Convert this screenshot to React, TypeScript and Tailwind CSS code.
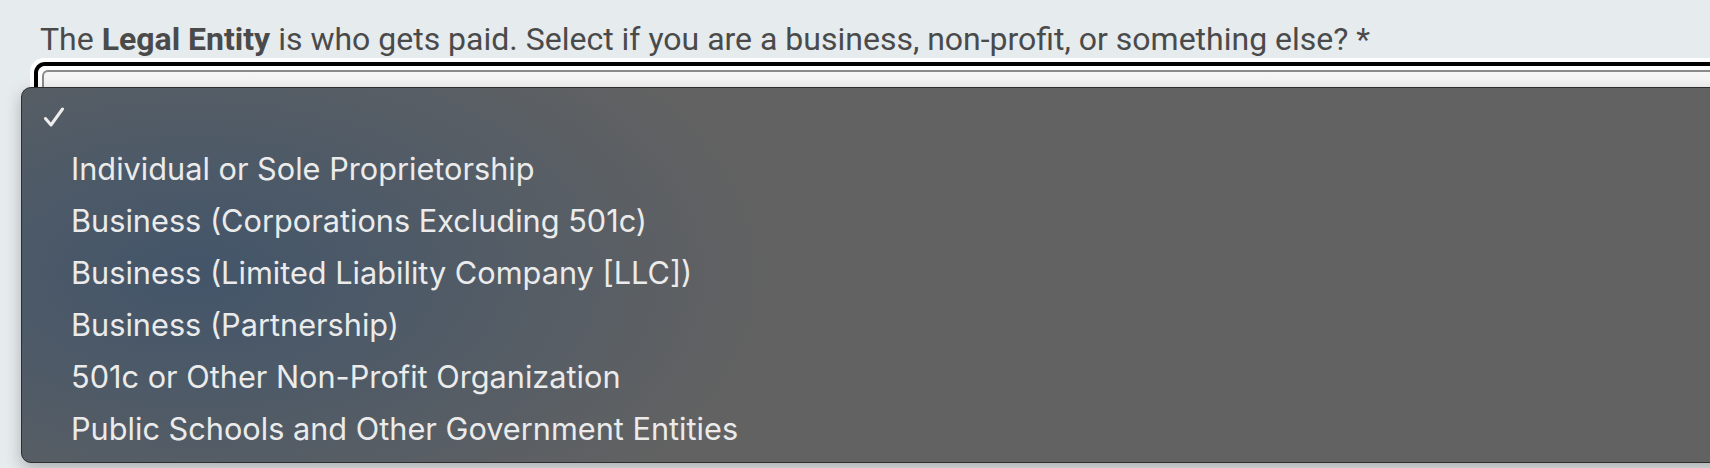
const options = [
  'Individual or Sole Proprietorship',
  'Business (Corporations Excluding 501c)',
  'Business (Limited Liability Company [LLC])',
  'Business (Partnership)',
  '501c or Other Non-Profit Organization',
  'Public Schools and Other Government Entities',
]

export default function App() {
  return (
    <div className="h-[468px] w-[1710px] overflow-hidden bg-[#e6ebee]">
      <div className="pl-[40px] pt-[21px] text-[32px] leading-[36px] text-[#4a4a4a] [font-family:Roboto,'Liberation_Sans',sans-serif]">
        The <b className="font-bold">Legal Entity</b> is who gets paid. Select if you are a business, non-profit, or something else? *
      </div>
      <div className="relative ml-[30px] mt-[1px]">
        {/* focused select */}
        <div className="rounded-l-[14px] border-y-4 border-l-4 border-white bg-white">
          <div className="rounded-l-[11px] border-y-4 border-l-4 border-black">
            <div className="rounded-l-[8px] border-y-4 border-l-4 border-white">
              <div className="h-[56px] rounded-l-[6px] border-t-2 border-l-2 border-[#8a8a8a] bg-gradient-to-b from-[#f6f6f6] to-[#ececec]" />
            </div>
          </div>
        </div>
        {/* native option popup */}
        <div className="absolute left-[-9px] top-[29px] w-[1720px] rounded-[10px] border border-[#2e2e2e] bg-[#626262] bg-[radial-gradient(ellipse_580px_320px_at_170px_185px,#43556a_0%,#4e5a67_38%,rgba(98,98,98,0)_100%)] pb-[7px] pt-[3px] shadow-[0_6px_16px_rgba(0,0,0,0.25)] [font-family:Inter,'Noto_Sans',sans-serif]">
          <div className="flex h-[52px] items-center pl-[21px] text-[#ededed]">
            <svg width="22" height="20" viewBox="0 0 22 20" fill="none" stroke="currentColor" strokeWidth="3" strokeLinecap="round" strokeLinejoin="round">
              <path d="M2.5 11.5 8 18 19.5 2" />
            </svg>
          </div>
          {options.map((o) => (
            <div key={o} className="flex h-[52px] items-center pl-[49px] text-[30.7px] text-[#ebebeb]">
              {o}
            </div>
          ))}
        </div>
      </div>
    </div>
  )
}
